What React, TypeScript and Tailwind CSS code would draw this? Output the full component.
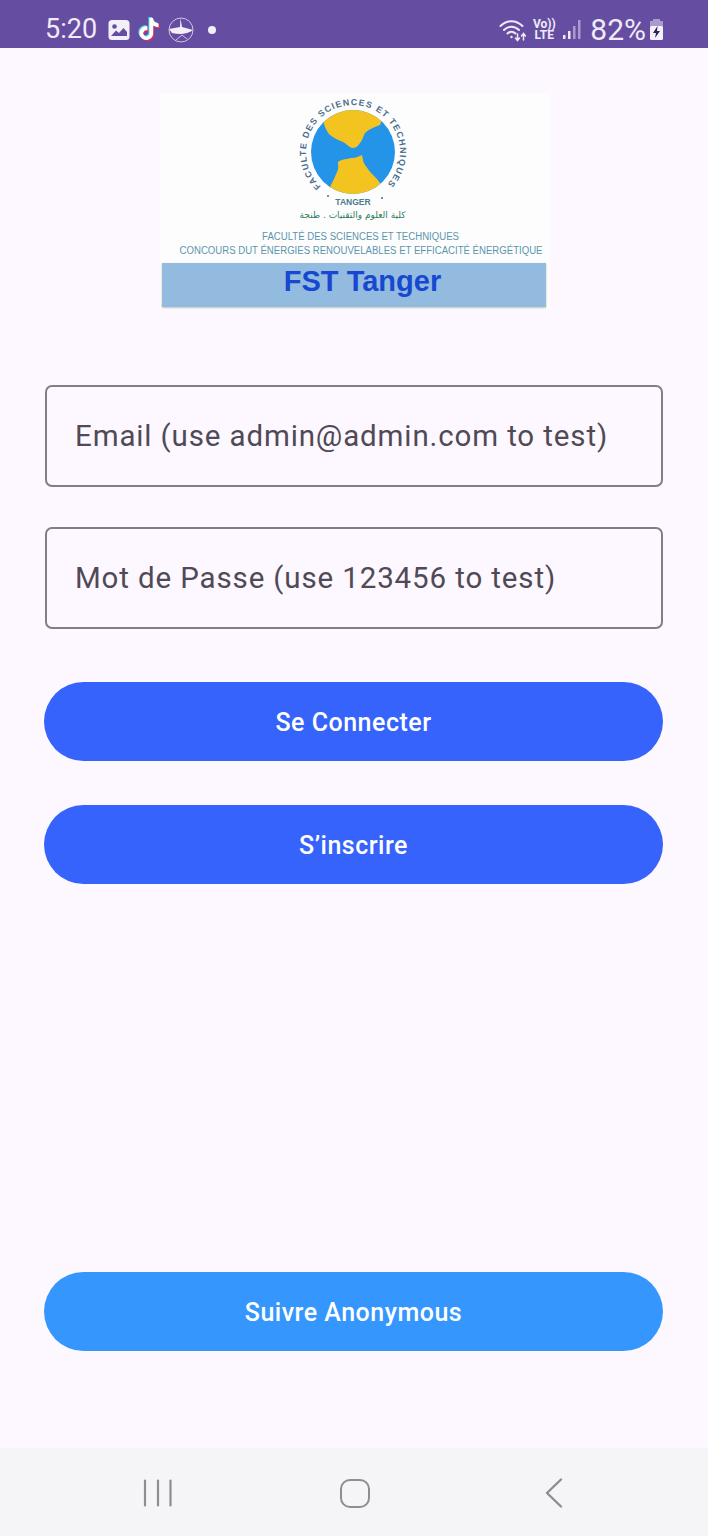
import { SiTiktok } from "react-icons/si";

function StatusBar() {
  return (
    <div className="flex h-[48px] items-center justify-between bg-[#654ea1] pl-[45px] pr-[44px] pt-[14px] pb-[3px] font-['Roboto',sans-serif] text-[#f0eaf7]">
      <div className="flex items-center">
        <span className="text-[27px] leading-none">5:20</span>
        <svg viewBox="0 0 22 20" className="ml-[11px] h-[20px] w-[22px]">
          <rect x="0.5" y="0" width="21" height="20" rx="3.5" fill="#f3eff9" />
          <circle cx="6.5" cy="6.5" r="2.3" fill="#654ea1" />
          <path d="M3 16 L8 10.5 L11 13 L15.5 8 L19 12 V16 Z" fill="#654ea1" />
        </svg>
        <div className="relative ml-[8px] h-[24px] w-[22px]">
          <SiTiktok className="absolute left-[1px] top-[1px] h-[22px] w-[22px] text-[#e8285a]" />
          <SiTiktok className="absolute left-[-1px] top-[-1px] h-[22px] w-[22px] text-[#4fdcea]" />
          <SiTiktok className="absolute left-0 top-0 h-[22px] w-[22px] text-white" />
        </div>
        <svg viewBox="0 0 26 26" fill="none" className="ml-[8px] h-[26px] w-[26px]">
          <circle cx="13" cy="13" r="12" stroke="#cfc6e2" strokeWidth="1" />
          <path d="M12.5 1 L14 10 L25 13 C20 17 12 18 4 16 L1 12 L12 10 Z" fill="#f3eff9" />
          <path d="M8 23 L14 18 L19 22" stroke="#cfc6e2" strokeWidth="1" />
        </svg>
        <span className="ml-[14px] h-[8px] w-[8px] rounded-full bg-[#f3eff9]" />
      </div>
      <div className="flex items-center">
        <svg viewBox="0 0 28 24" fill="none" stroke="#f0eaf7" strokeLinecap="round" className="h-[24px] w-[28px]">
          <path d="M1.5 8 C8 1.5 17 1.5 23.5 8" strokeWidth="2" />
          <path d="M5 12 C9.5 7.5 15.5 7.5 20 12" strokeWidth="2" />
          <path d="M8.5 15.5 C11 13 14 13 16.5 15.5" strokeWidth="2" />
          <circle cx="12.5" cy="19" r="1.2" fill="#f0eaf7" stroke="none" />
          <path d="M18.5 16 V22 M16.5 20 L18.5 22.5 L20.5 20" strokeWidth="1.5" />
          <path d="M24.5 22 V16 M22.5 18 L24.5 15.5 L26.5 18" strokeWidth="1.5" />
        </svg>
        <div className="ml-[6px] flex w-[22px] flex-col items-center text-[12px] font-bold leading-[11px]">
          <span>Vo))</span>
          <span>LTE</span>
        </div>
        <svg viewBox="0 0 20 22" className="ml-[7px] h-[22px] w-[20px]">
          <rect x="1" y="16" width="2.5" height="4" fill="#f0eaf7" />
          <rect x="6" y="12" width="2.5" height="8" fill="#f0eaf7" />
          <rect x="11" y="7" width="2.5" height="13" fill="#a99bcb" />
          <rect x="16" y="1" width="2.5" height="19" fill="#a99bcb" />
        </svg>
        <span className="ml-[8px] text-[30px] leading-none">82%</span>
        <svg viewBox="0 0 15 24" className="ml-[3px] h-[24px] w-[15px]">
          <rect x="4" y="1" width="7" height="3" fill="#a99bcb" />
          <rect x="1" y="3" width="13" height="6" fill="#a99bcb" />
          <rect x="1" y="8" width="13" height="14" rx="1.5" fill="#f5f1fa" />
          <path d="M8.5 8 L4 15 H7 L6 20 L11 13 H8 Z" fill="#2b2350" />
        </svg>
      </div>
    </div>
  );
}

function Logo() {
  return (
    <div className="ml-[160px] mt-[45px] flex h-[217px] w-[390px] flex-col items-center bg-[#fefdfe]">
      <svg viewBox="0 0 130 118" className="ml-[-5px] h-[118px] w-[130px] shrink-0" fontFamily="'Liberation Sans', sans-serif">
        <defs>
          <path id="ring" d="M33 93.4 A47 47 0 1 1 97 93.4" />
          <clipPath id="disc">
            <circle cx="65" cy="59" r="42" />
          </clipPath>
        </defs>
        <circle cx="65" cy="59" r="42" fill="#2394e8" />
        <g clipPath="url(#disc)" fill="#f3c420">
          <path d="M37 34 C39 38 40 40 42 42 C47 46 51 47 55 49 C59 51 61 54 64 55 C68 55 70 53 72 50 C75 47 75 43 77 40 C81 36 87 34 92 32 L104 0 H26 Z" />
          <path d="M42 94 C45 88 47 84 49 79 C51 75 50 72 50 69 C54 66 59 66 64 65 C68 65 71 63 74 62 C75 66 75 69 77 72 C80 76 82 79 85 82 C88 85 90 87 92 90 L104 118 H30 Z" />
        </g>
        <text fontSize="8.8" fontWeight="700" fill="#4a6f8e" textLength="221" lengthAdjust="spacing">
          <textPath href="#ring">FACULTE DES SCIENCES ET TECHNIQUES</textPath>
        </text>
        <circle cx="40" cy="103" r="1" fill="#4a6f8e" />
        <circle cx="94" cy="105" r="1" fill="#4a6f8e" />
        <text x="65" y="112" textAnchor="middle" fontSize="8.5" fontWeight="700" fill="#4a7c90">TANGER</text>
      </svg>
      <span dir="rtl" className="ml-[-5px] font-['DejaVu_Sans',sans-serif] text-[9px] leading-[9px] text-[#2f7d5c]">كلية العلوم والتقنيات . طنجة</span>
      <span className="mt-[11px] ml-[11px] whitespace-nowrap font-['Liberation_Sans',sans-serif] text-[10px] leading-[12px] text-[#5a95ac] scale-x-[0.96]">FACULTÉ DES SCIENCES ET TECHNIQUES</span>
      <span className="mt-[2px] ml-[12px] whitespace-nowrap font-['Liberation_Sans',sans-serif] text-[10px] leading-[12px] text-[#5a95ac] scale-x-[0.96]">CONCOURS DUT ÉNERGIES RENOUVELABLES ET EFFICACITÉ ÉNERGÉTIQUE</span>
      <div className="ml-[-2px] mt-[6px] flex h-[44px] w-[384px] items-center justify-center bg-[#93bbe0] pb-[6px] pl-[17px] font-['Liberation_Sans',sans-serif] text-[29px] font-bold text-[#1748d0] shadow-[0_1px_2px_rgba(0,0,0,0.25)]">
        FST Tanger
      </div>
    </div>
  );
}

function Field({ label }: { label: string }) {
  return (
    <div className="ml-[1px] flex h-[102px] items-center rounded-[7px] border-2 border-[#827d88] pl-[28px] text-[29.5px] tracking-[0.87px] text-[#4f4a55]">
      {label}
    </div>
  );
}

function PillButton({ label, color }: { label: string; color: string }) {
  return (
    <button className={`h-[79px] w-full rounded-full pt-[2px] text-[25px] font-medium tracking-[0.5px] text-white ${color}`}>
      {label}
    </button>
  );
}

function NavBar() {
  return (
    <div className="flex h-[88px] items-center bg-[#f5f5f8] pt-[2px]">
      <svg viewBox="0 0 30 28" fill="none" stroke="#8e8e92" strokeWidth="2.2" strokeLinecap="round" className="ml-[143px] h-[28px] w-[30px]">
        <path d="M2 1.5 V26.5 M15 1.5 V26.5 M27.5 1.5 V26.5" />
      </svg>
      <div className="ml-[167px] h-[29px] w-[30px] rounded-[10px] border-[2.5px] border-[#8e8e92]" />
      <svg viewBox="0 0 18 30" fill="none" stroke="#8e8e92" strokeWidth="2.4" strokeLinecap="round" strokeLinejoin="round" className="ml-[175px] h-[30px] w-[18px]">
        <path d="M16 1.5 L2 15 L16 28.5" />
      </svg>
    </div>
  );
}

export default function App() {
  return (
    <div className="flex h-[1536px] w-[708px] flex-col overflow-hidden bg-[#fdf7ff] font-['Roboto',sans-serif]">
      <StatusBar />
      <main className="flex flex-1 flex-col">
        <Logo />
        <div className="mt-[75px] flex flex-col pl-[44px] pr-[45px]">
          <Field label="Email (use admin@admin.com to test)" />
          <div className="mt-[40px]">
            <Field label="Mot de Passe (use 123456 to test)" />
          </div>
          <div className="mt-[53px]">
            <PillButton label="Se Connecter" color="bg-[#3563fb]" />
          </div>
          <div className="mt-[44px]">
            <PillButton label="S’inscrire" color="bg-[#3563fb]" />
          </div>
        </div>
        <div className="mt-auto pb-[97px] pl-[44px] pr-[45px]">
          <PillButton label="Suivre Anonymous" color="bg-[#3597fd]" />
        </div>
      </main>
      <NavBar />
    </div>
  );
}
